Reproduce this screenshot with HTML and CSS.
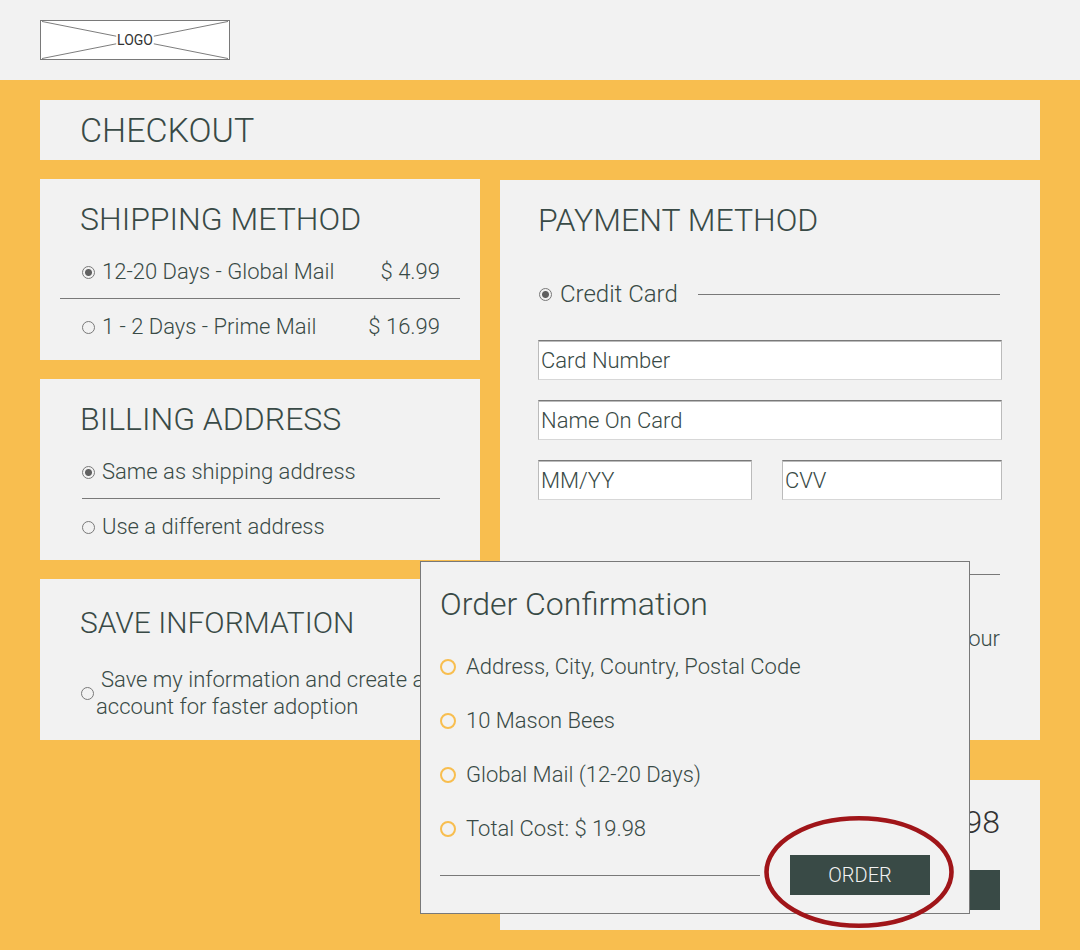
FILE: index.html
```html
<!DOCTYPE html>
<html lang="en">
<head>
<meta charset="utf-8">
<meta name="viewport" content="width=device-width, initial-scale=1">
<title>Checkout</title>
<link rel="stylesheet" href="styles.css">
</head>
<body>
<header class="site-header">
  <a class="logo" href="#">
    <svg class="logo-cross" viewBox="0 0 190 40" preserveAspectRatio="none" aria-hidden="true">
      <path d="M1 .5 76 16M189 .5 114 16M1 39.5 76 24M189 39.5 114 24" fill="none" stroke="#797979"/>
    </svg>
    <span class="logo-text">LOGO</span>
  </a>
</header>
<main class="page">
  <h1 class="page-title">CHECKOUT</h1>
  <div class="columns">
    <div class="column">
      <section class="panel options">
        <h2 class="heading">SHIPPING METHOD</h2>
        <div class="option">
          <input class="radio" type="radio" name="shipping" id="ship-global" checked>
          <label for="ship-global">12-20 Days - Global Mail</label>
          <span class="price">$ 4.99</span>
        </div>
        <hr class="rule wide-rule">
        <div class="option">
          <input class="radio" type="radio" name="shipping" id="ship-prime">
          <label for="ship-prime">1 - 2 Days - Prime Mail</label>
          <span class="price">$ 16.99</span>
        </div>
      </section>
      <section class="panel options">
        <h2 class="heading">BILLING ADDRESS</h2>
        <div class="option">
          <input class="radio" type="radio" name="billing" id="bill-same" checked>
          <label for="bill-same">Same as shipping address</label>
        </div>
        <hr class="rule option-rule">
        <div class="option">
          <input class="radio" type="radio" name="billing" id="bill-other">
          <label for="bill-other">Use a different address</label>
        </div>
      </section>
      <section class="panel save">
        <h2 class="heading small">SAVE INFORMATION</h2>
        <div class="save-option">
          <input class="radio" type="radio" name="save" id="save-info">
          <label class="save-label" for="save-info">Save my information and create a<br>account for faster adoption</label>
        </div>
      </section>
    </div>
    <div class="column right">
      <section class="panel payment">
        <h2 class="heading">PAYMENT METHOD</h2>
        <div class="method">
          <input class="radio" type="radio" name="payment" id="pay-card" checked>
          <label for="pay-card">Credit Card</label>
          <hr class="rule method-rule">
        </div>
        <div class="fields">
          <input class="field full" type="text" placeholder="Card Number" aria-label="Card Number">
          <input class="field full" type="text" placeholder="Name On Card" aria-label="Name On Card">
          <input class="field" type="text" placeholder="MM/YY" aria-label="MM/YY">
          <input class="field" type="text" placeholder="CVV" aria-label="CVV">
        </div>
        <hr class="rule payment-rule">
        <p class="note">your</p>
      </section>
      <section class="panel total">
        <p class="amount">$ 19.98</p>
        <button class="button" type="button" aria-label="Order"></button>
      </section>
    </div>
  </div>
  <section class="dialog" role="dialog" aria-labelledby="dialog-title">
    <h2 class="heading" id="dialog-title">Order Confirmation</h2>
    <ul class="summary">
      <li class="item">Address, City, Country, Postal Code</li>
      <li class="item">10 Mason Bees</li>
      <li class="item">Global Mail (12-20 Days)</li>
      <li class="item">Total Cost: $ 19.98</li>
    </ul>
    <div class="actions">
      <hr class="rule actions-rule">
      <div class="highlight">
        <button class="button" type="button">ORDER</button>
        <svg class="ellipse" viewBox="0 0 190 112" aria-hidden="true">
          <ellipse cx="95" cy="56" rx="92.5" ry="53.7" fill="none" stroke="#a01519" stroke-width="4.6"/>
        </svg>
      </div>
    </div>
  </section>
</main>
</body>
</html>
```
FILE: styles.css
```css
*, *::before { box-sizing: border-box; }

body {
  margin: 0;
  background: #f8be4f;
  color: #394a46;
  font: 300 22px/28px Roboto, "Liberation Sans", sans-serif;
}

h1, h2, p, ul, hr { margin: 0; padding: 0; font-weight: 300; }

.site-header {
  padding: 20px 40px;
  background: #f2f2f2;
}

.logo {
  display: grid;
  width: 190px;
  height: 40px;
  border: 1px solid #797979;
  background: #fff;
  color: #333;
  font-size: 14px;
  font-weight: 400;
  line-height: 16px;
  text-decoration: none;
}

.logo-cross, .logo-text { grid-area: 1 / 1; }
.logo-cross { width: 100%; height: 38px; }
.logo-text { place-self: center; }

.page {
  position: relative;
  padding: 20px 40px;
}

.page-title {
  padding: 10px 40px;
  background: #f2f2f2;
  font-size: 34px;
  line-height: 40px;
}

.columns {
  display: grid;
  grid-template-columns: 22fr 27fr;
  gap: 20px;
  align-items: start;
  margin-top: 19px;
}

.column { display: grid; gap: 19px; }
.right { gap: 40px; margin-top: 1px; }

.panel { background: #f2f2f2; }

.heading {
  font-size: 32px;
  line-height: 40px;
}
.heading.small { font-size: 30px; }

.rule {
  height: 1px;
  border: 0;
  background: #797979;
}

.radio {
  appearance: none;
  flex: none;
  width: 13px;
  height: 13px;
  margin: 0;
  border: 1px solid #797979;
  border-radius: 50%;
}
.radio:checked {
  background: radial-gradient(circle, #606060 3px, transparent 4px);
}

.options { padding: 20px 40px 7px; }
.options .heading { margin-bottom: 5px; }

.option {
  display: flex;
  align-items: center;
  gap: 7px;
  height: 54px;
  padding: 2px 0 0 2px;
}
.price { margin-left: auto; }
.wide-rule { margin: 0 -20px; }
.option-rule { margin-left: 2px; }

.save { padding: 24px 0 20px 40px; }

.save-option {
  display: flex;
  align-items: center;
  gap: 2px;
  margin-top: 23px;
  padding-left: 1px;
}

.save-label {
  line-height: 27px;
  text-indent: 5px;
  white-space: nowrap;
}

.payment { padding: 20px 38px 87px; }

.method {
  display: flex;
  align-items: center;
  gap: 8px;
  margin: 34px 2px 26px 0;
  padding-left: 1px;
  font-size: 24px;
  line-height: 40px;
}
.method-rule { flex: 1; margin-left: 12px; }

.fields {
  display: grid;
  grid-template-columns: 214fr 220fr;
  gap: 20px 30px;
}

.field {
  width: 100%;
  height: 40px;
  padding: 0 2px;
  border: 1px solid;
  border-color: #797979 #bbb #d7d7d7;
  background: #fff;
  box-shadow: inset 0 1px #bbb;
  color: inherit;
  font: inherit;
}
.field::placeholder { color: inherit; opacity: 1; }
.full { grid-column: 1 / -1; }

.payment-rule { margin: 74px 2px 50px; }
.note { margin-right: 2px; text-align: right; }

.total {
  display: grid;
  justify-items: end;
  gap: 28px;
  padding: 22px 40px 20px;
}
.amount {
  color: #333;
  font-size: 32px;
  line-height: 40px;
}

.button {
  display: block;
  width: 140px;
  height: 40px;
  padding: 0;
  border: 0;
  background: #394a46;
  color: #f2f2f2;
  font: inherit;
  font-size: 20px;
}

.dialog {
  position: absolute;
  top: 481px;
  left: calc(50% - 120px);
  width: 550px;
  padding: 22px 39px 18px 19px;
  border: 1px solid #797979;
  background: #f2f2f2;
}

.summary {
  margin-top: 15px;
  list-style: none;
}

.item {
  display: flex;
  align-items: center;
  gap: 10px;
  height: 54px;
  padding-top: 1px;
}
.item::before {
  content: "";
  width: 16px;
  height: 16px;
  border: 2px solid #f8be4f;
  border-radius: 50%;
}

.actions {
  display: flex;
  align-items: center;
  gap: 30px;
}
.actions-rule { flex: 1; }
.highlight { position: relative; }

.ellipse {
  position: absolute;
  top: -39px;
  left: -26px;
  width: 190px;
  height: 112px;
  pointer-events: none;
}
```
